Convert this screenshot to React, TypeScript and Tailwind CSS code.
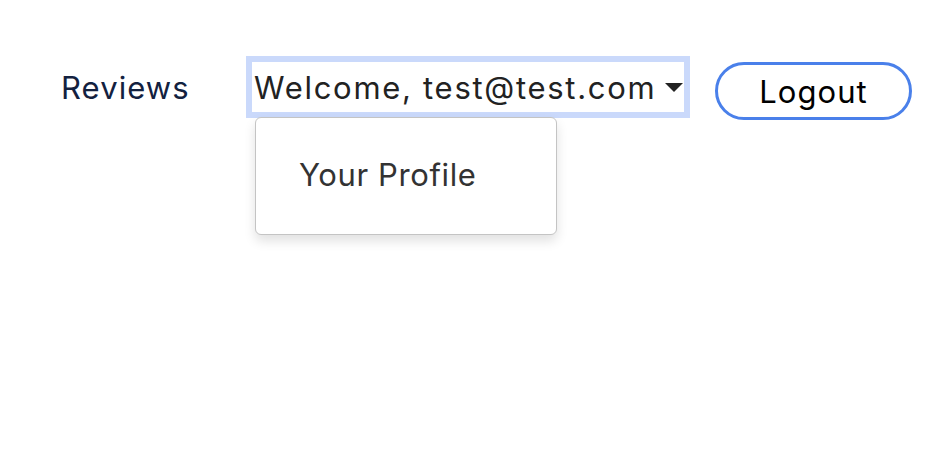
const App = () => {
  return (
    <div className="min-h-screen w-full bg-white font-['Inter',sans-serif]">
      <nav className="flex items-start pt-[62px]">
        <div className="w-[252px] h-[50px] flex items-center pl-[61px]">
          <a href="#" className="text-[31px] tracking-[0.035em] text-[#13213f] leading-none">
            Reviews
          </a>
        </div>
        <div className="relative">
          <button className="flex items-center h-[50px] w-[432px] bg-white outline-[6px] outline-solid outline-[#cad9fb] pl-[2px] text-[31px] tracking-[0.055em] text-[#222] leading-none">
            <span>Welcome, test@test.com</span>
            <span className="ml-auto mr-[1px] w-0 h-0 border-t-[9px] border-t-[#222] border-x-[9px] border-x-transparent" />
          </button>
          <div className="absolute left-[3px] top-[55px] w-[302px] h-[118px] bg-white border border-[#c4c4c4] rounded-[6px] shadow-[0_6px_12px_rgba(0,0,0,0.12)] flex items-center pb-[4px]">
            <span className="pl-[43px] text-[31px] tracking-[0.02em] text-[#333] leading-none">Your Profile</span>
          </div>
        </div>
        <button className="ml-[31px] w-[197px] h-[58px] rounded-full border-[3px] border-[#4a80ea] text-[31px] tracking-[0.035em] text-black leading-none">
          Logout
        </button>
      </nav>
    </div>
  );
};

export default App;
